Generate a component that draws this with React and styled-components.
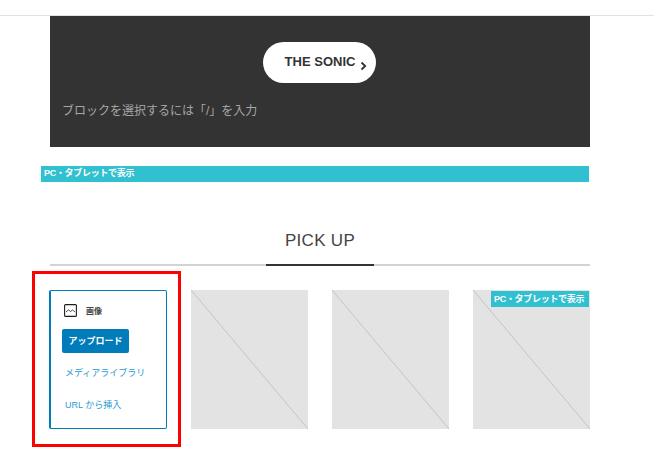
import React from "react";
import styled, { createGlobalStyle } from "styled-components";

const GlobalStyle = createGlobalStyle`
  html, body {
    margin: 0;
    padding: 0;
    background: #fff;
  }
  body {
    font-family: "Liberation Sans", "Noto Sans CJK JP", sans-serif;
  }
`;

const Page = styled.div`
  position: relative;
  width: 654px;
  height: 456px;
  overflow: hidden;
  padding-top: 15px;
  box-sizing: border-box;
`;

const TopLine = styled.div`
  height: 1px;
  background: #e2e2e2;
`;

const Content = styled.div`
  width: 540px;
  margin-left: 50px;
`;

const Hero = styled.section`
  height: 131px;
  background: #333;
  padding: 26px 12px 0;
  box-sizing: border-box;
  display: flex;
  flex-direction: column;
  align-items: stretch;
`;

const SonicButton = styled.div`
  align-self: center;
  width: 113px;
  height: 41px;
  margin-left: -1px;
  border-radius: 21px;
  background: #fff;
  color: #333;
  font-size: 13px;
  font-weight: 700;
  display: flex;
  align-items: center;
  justify-content: center;
  gap: 5px;
  padding: 0 0 2px 13px;
  box-sizing: border-box;
`;

const Chevron = styled.svg`
  width: 7px;
  height: 10px;
  margin-top: 9px;
`;

const BlockHint = styled.p`
  margin: 20px 0 0;
  color: #a6a6a6;
  font-size: 12px;
  line-height: 16px;
`;

const DeviceStrip = styled.div`
  margin: 19px 1px 0 -9px;
  height: 16px;
  padding-left: 3px;
  background: #31c0d0;
  color: #fff;
  font-size: 9px;
  line-height: 15px;
  letter-spacing: -0.3px;
  font-weight: 700;
  white-space: nowrap;
`;

const SectionHead = styled.div`
  margin-top: 46px;
  height: 36px;
  border-bottom: 2px solid #d3d3d3;
  position: relative;
  text-align: center;
`;

const SectionTitle = styled.h2`
  margin: 0;
  display: inline-block;
  box-sizing: border-box;
  width: 108px;
  height: 36px;
  padding-top: 2px;
  font-size: 17px;
  font-weight: 400;
  line-height: 18px;
  letter-spacing: 0.3px;
  color: #444;
  border-bottom: 2px solid #333;
  position: relative;
  top: 2px;
`;

const CardRow = styled.div`
  display: grid;
  grid-template-columns: repeat(4, 117px);
  column-gap: 24px;
  margin-top: 24px;
`;

const UploadCard = styled.div`
  height: 139px;
  margin-left: -1px;
  box-sizing: border-box;
  border: 1px solid #007cba;
  border-left-width: 2px;
  border-radius: 2px;
  padding: 13px 11px 0;
`;

const CardLabel = styled.div`
  display: flex;
  align-items: center;
  gap: 9px;
  margin-left: 2px;
  height: 13px;
  font-size: 8px;
  font-weight: 700;
  color: #444;
`;

const ImageIcon = styled.svg`
  width: 13px;
  height: 13px;
  flex: none;
`;

const UploadButton = styled.div`
  margin-top: 12px;
  width: 67px;
  height: 24px;
  border-radius: 2px;
  background: #007cba;
  color: #fff;
  font-size: 9px;
  font-weight: 700;
  line-height: 24px;
  text-align: center;
`;

const MediaLink = styled.div`
  margin: ${(p) => p.$top}px 0 0 3px;
  color: #2b9ad0;
  font-size: 9px;
  line-height: 12px;
  white-space: nowrap;
`;

const Placeholder = styled.div`
  position: relative;
  height: 139px;
  background: #e3e3e3;
`;

const Diagonal = styled.svg`
  display: block;
  width: 100%;
  height: 100%;
`;

const CornerBadge = styled.span`
  position: absolute;
  top: 1px;
  right: 1px;
  width: 98px;
  height: 16px;
  padding-left: 3px;
  box-sizing: border-box;
  background: #31c0d0;
  color: #fff;
  font-size: 9px;
  font-weight: 700;
  letter-spacing: -0.3px;
  line-height: 16px;
  white-space: nowrap;
`;

const RedFrame = styled.div`
  position: absolute;
  left: 32px;
  top: 271px;
  width: 149px;
  height: 176px;
  box-sizing: border-box;
  border: 3px solid #f00;
  pointer-events: none;
`;

function PlaceholderCard({ badge }) {
  return (
    <Placeholder>
      <Diagonal viewBox="0 0 117 139" preserveAspectRatio="none">
        <line x1="0" y1="0" x2="117" y2="139" stroke="#c4c4c4" strokeWidth="1" />
      </Diagonal>
      {badge && <CornerBadge>{badge}</CornerBadge>}
    </Placeholder>
  );
}

export default function App() {
  return (
    <Page>
      <GlobalStyle />
      <TopLine />
      <Content>
        <Hero>
          <SonicButton>
            THE SONIC
            <Chevron viewBox="0 0 7 10">
              <path d="M1.5 1.5 L5.2 5 L1.5 8.5" fill="none" stroke="#333" strokeWidth="1.8" />
            </Chevron>
          </SonicButton>
          <BlockHint>ブロックを選択するには「/」を入力</BlockHint>
        </Hero>
        <DeviceStrip>PC・タブレットで表示</DeviceStrip>
        <SectionHead>
          <SectionTitle>PICK UP</SectionTitle>
        </SectionHead>
        <CardRow>
          <UploadCard>
            <CardLabel>
              <ImageIcon viewBox="0 0 13 13">
                <rect x="0.6" y="0.6" width="11.8" height="11.8" rx="1" fill="none" stroke="#1e1e1e" strokeWidth="1.1" />
                <path d="M2 8 L4.5 5.8 L6.5 7.5 L8.5 6 L11 8" fill="none" stroke="#1e1e1e" strokeWidth="0.8" />
              </ImageIcon>
              画像
            </CardLabel>
            <UploadButton>アップロード</UploadButton>
            <MediaLink $top={14}>メディアライブラリ</MediaLink>
            <MediaLink $top={20}>URL から挿入</MediaLink>
          </UploadCard>
          <PlaceholderCard />
          <PlaceholderCard />
          <PlaceholderCard badge="PC・タブレットで表示" />
        </CardRow>
      </Content>
      <RedFrame />
    </Page>
  );
}
